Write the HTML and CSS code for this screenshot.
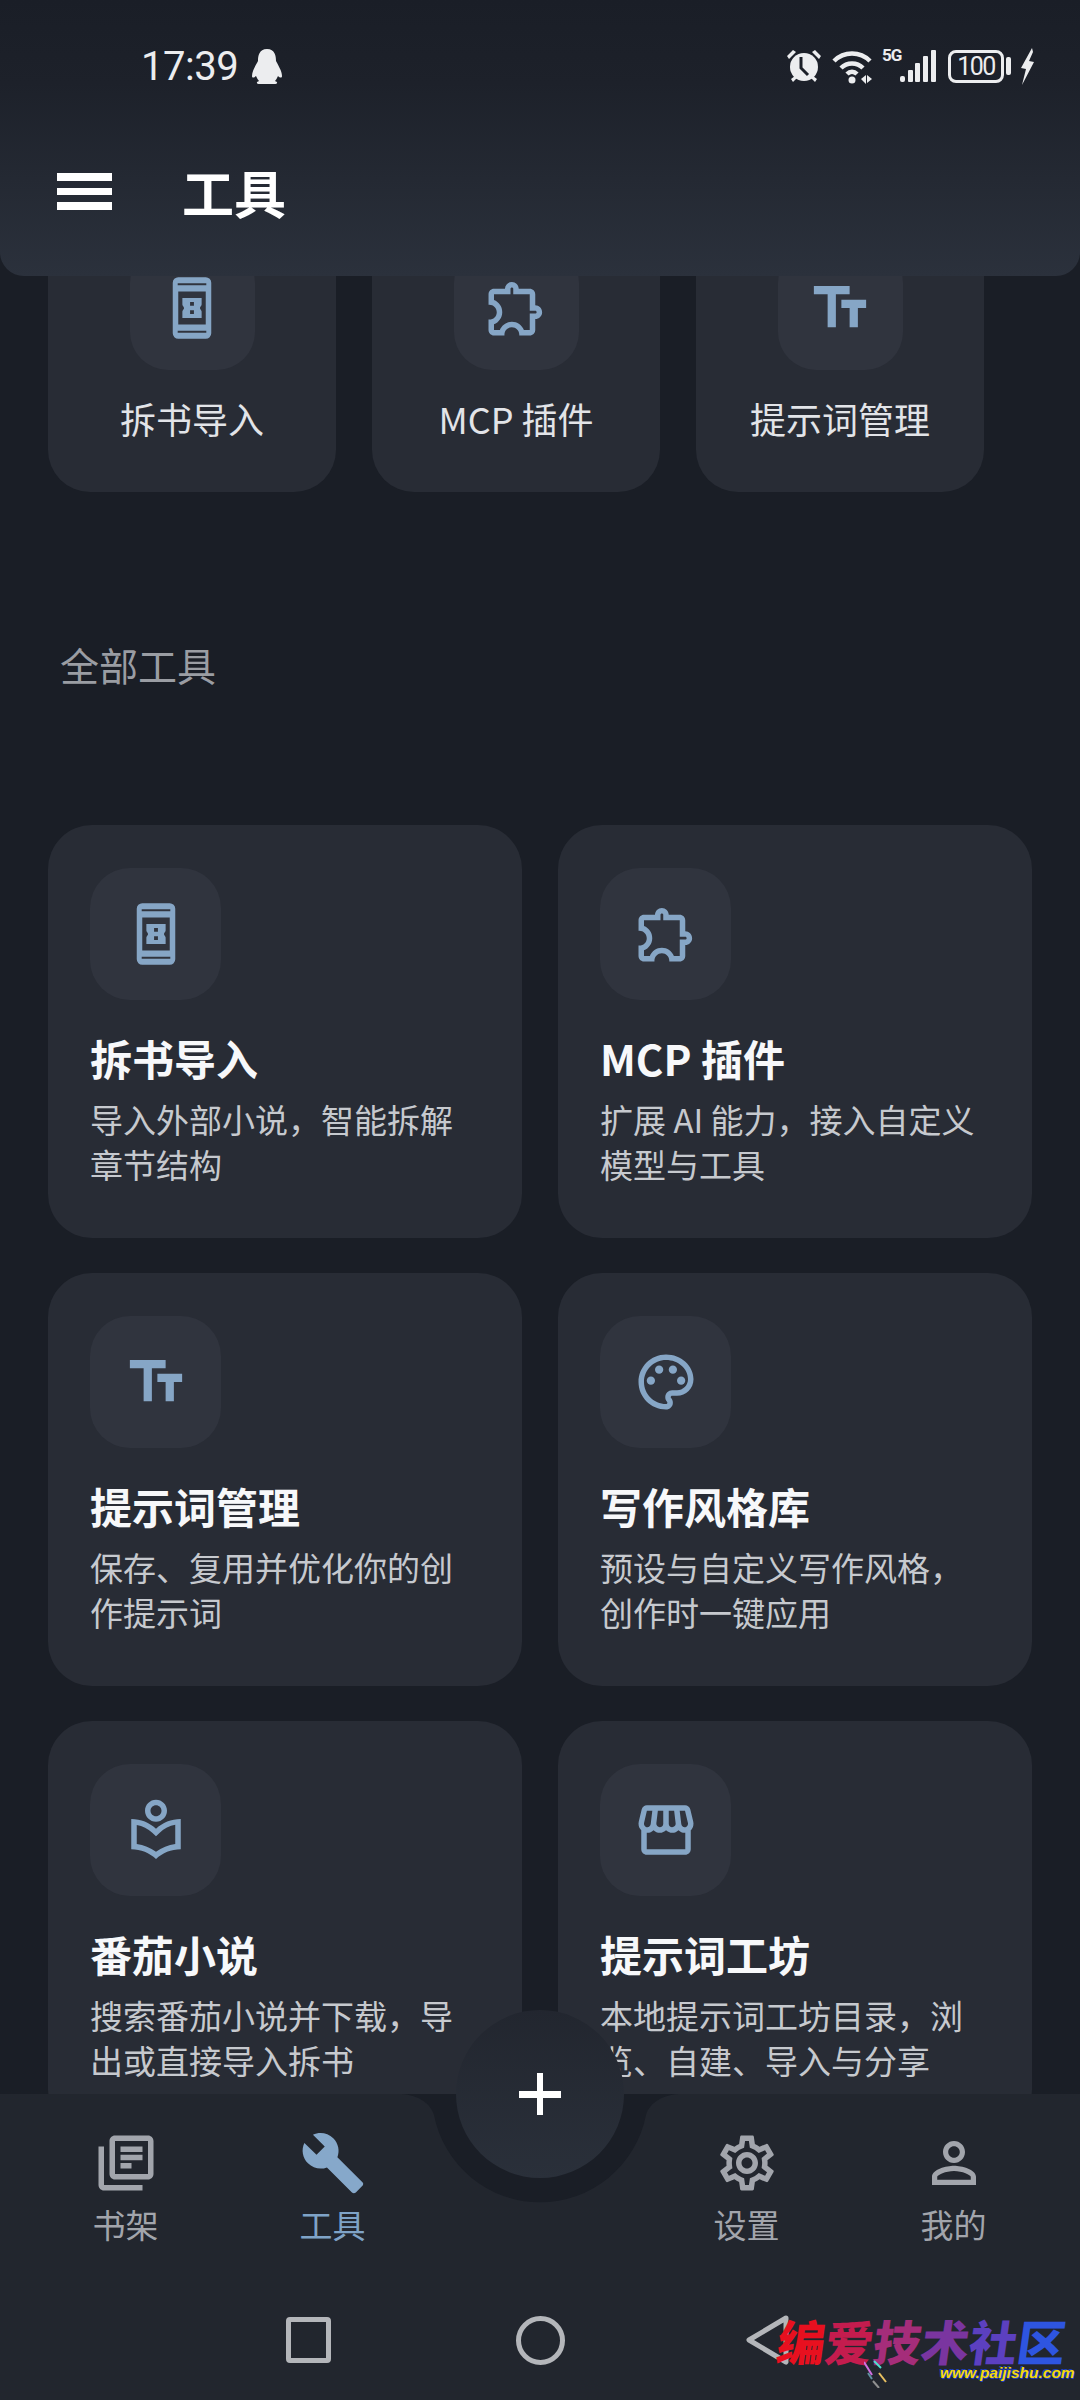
FILE: index.html
```html
<!DOCTYPE html>
<html lang="zh-CN">
<head>
    <meta charset="UTF-8">
    <meta name="viewport" content="width=device-width, initial-scale=1.0">
    <title>工具</title>
    <link rel="stylesheet" href="styles.css">
</head>
<body>
    <svg class="icon-defs" aria-hidden="true">
        <symbol id="i-phone" viewBox="0 0 24 24">
            <path fill-rule="evenodd" d="M7 .8h10a2 2 0 0 1 2 2v18.4a2 2 0 0 1-2 2H7a2 2 0 0 1-2-2V2.800a2 2 0 0 1 2-2zM6.800 3v.7h10.400V3zm.2 3v12h10V6zm-.2 14.300v.7h10.400v-.7z"/>
            <path fill-rule="evenodd" d="M8.500 8.400h7v2.300c0 .5-.6.8-.6 1.300s.6.8.6 1.300v2.300h-7v-2.300c0-.5.6-.8.6-1.300s-.6-.8-.6-1.300zM11.300 9.800v1.400h1.400V9.800zm0 3v1.400h1.400v-1.400z"/>
        </symbol>
        <symbol id="i-puzzle" viewBox="0 0 24 24">
            <path d="M10.500 4.500c.28 0 .5.22.5.5v2h6v6h2c.28 0 .5.22.5.5s-.22.5-.5.5h-2v6h-2.120c-.68-1.750-2.390-3-4.380-3s-3.700 1.250-4.380 3H4v-2.120c1.750-.68 3-2.390 3-4.380 0-1.990-1.240-3.700-2.990-4.380L4 7h6V5c0-.28.22-.5.5-.5m0-2C9.120 2.500 8 3.620 8 5H4c-1.100 0-1.990.9-1.990 2v3.800h.29c1.490 0 2.700 1.210 2.700 2.700s-1.210 2.700-2.700 2.700H2V20c0 1.100.9 2 2 2h3.800v-.3c0-1.490 1.210-2.700 2.700-2.700s2.700 1.210 2.700 2.700v.3H17c1.100 0 2-.9 2-2v-4c1.380 0 2.500-1.120 2.500-2.500S20.380 11 19 11V7c0-1.100-.9-2-2-2h-4c0-1.380-1.120-2.500-2.500-2.500z"/>
        </symbol>
        <symbol id="i-text" viewBox="0 0 24 24">
            <path d="M2.500 4v3h5v12h3V7h5V4h-13zm19 5h-9v3h3v7h3v-7h3V9z"/>
        </symbol>
        <symbol id="i-palette" viewBox="0 0 24 24">
            <path d="M12 22C6.490 22 2 17.510 2 12S6.490 2 12 2s10 4.040 10 9c0 3.310-2.690 6-6 6h-1.770c-.28 0-.5.22-.5.5 0 .12.05.23.13.33.41.47.64 1.060.64 1.670 0 1.380-1.120 2.500-2.500 2.500zm0-18c-4.410 0-8 3.590-8 8s3.590 8 8 8c.28 0 .5-.22.5-.5 0-.16-.08-.28-.14-.35-.41-.46-.63-1.050-.63-1.650 0-1.380 1.120-2.500 2.500-2.500H16c2.210 0 4-1.790 4-4 0-3.860-3.590-7-8-7z"/>
            <circle cx="6.500" cy="11.500" r="1.500"/>
            <circle cx="9.500" cy="7.500" r="1.500"/>
            <circle cx="14.500" cy="7.500" r="1.500"/>
            <circle cx="17.500" cy="11.500" r="1.500"/>
        </symbol>
        <symbol id="i-reader" viewBox="0 0 24 24">
            <path d="M12 11.550C9.640 9.350 6.480 8 3 8v11c3.480 0 6.640 1.350 9 3.550 2.360-2.190 5.520-3.550 9-3.550V8c-3.480 0-6.640 1.350-9 3.550zm7 5.580c-2.530.34-4.930 1.300-7 2.820-2.060-1.520-4.470-2.490-7-2.830v-6.950c2.100.38 4.050 1.340 5.640 2.870L12 14.300l1.360-1.310c1.590-1.530 3.540-2.490 5.640-2.870v7.010z"/>
            <path d="M12 9c2.200 0 4-1.800 4-4s-1.800-4-4-4-4 1.800-4 4 1.800 4 4 4zm0-6c1.100 0 2 .9 2 2s-.9 2-2 2-2-.9-2-2 .9-2 2-2z"/>
        </symbol>
        <symbol id="i-store" viewBox="0 0 24 24">
            <path d="M21.900 8.890l-1.050-4.370c-.22-.9-1-1.520-1.910-1.520H5.050c-.9 0-1.690.63-1.900 1.520L2.100 8.890c-.24 1.020-.02 2.060.62 2.880.08.11.19.19.28.29V19c0 1.100.9 2 2 2h14c1.100 0 2-.9 2-2v-6.940c.09-.09.2-.18.28-.28.64-.82.87-1.870.62-2.890zm-2.990-3.900l1.050 4.370c.1.42.01.84-.25 1.170-.14.18-.44.47-.94.47-.61 0-1.140-.49-1.210-1.140L16.980 5l1.930-.01zM13 5h1.960l.54 4.520c.05.39-.07.78-.33 1.070-.22.26-.54.41-.95.41-.67 0-1.220-.59-1.220-1.310V5zM8.490 9.520L9.040 5H11v4.690c0 .72-.55 1.310-1.290 1.310-.34 0-.65-.15-.89-.41-.25-.29-.37-.68-.33-1.070zm-4.450-.16L5.050 5h1.970l-.58 4.860c-.08.65-.6 1.140-1.210 1.140-.49 0-.8-.29-.93-.47-.27-.32-.36-.75-.26-1.170zM5 19v-6.030c.08.01.15.03.23.03.87 0 1.660-.36 2.240-.95.6.6 1.400.95 2.310.95.87 0 1.650-.36 2.230-.93.59.57 1.390.93 2.290.93.84 0 1.640-.35 2.240-.95.58.59 1.370.95 2.240.95.08 0 .15-.02.23-.03V19H5z"/>
        </symbol>
    </svg>

    <div class="screen">
        <main class="content">
            <div class="quick-row">
                <div class="quick-card">
                    <div class="quick-tile"><svg class="tile-icon"><use href="#i-phone"/></svg></div>
                    <span class="quick-label">拆书导入</span>
                </div>
                <div class="quick-card">
                    <div class="quick-tile"><svg class="tile-icon"><use href="#i-puzzle"/></svg></div>
                    <span class="quick-label">MCP 插件</span>
                </div>
                <div class="quick-card">
                    <div class="quick-tile"><svg class="tile-icon"><use href="#i-text"/></svg></div>
                    <span class="quick-label">提示词管理</span>
                </div>
            </div>

            <h2 class="section-title">全部工具</h2>

            <div class="tool-grid">
                <div class="tool-card">
                    <div class="tool-tile"><svg class="tile-icon"><use href="#i-phone"/></svg></div>
                    <h3 class="tool-name">拆书导入</h3>
                    <p class="tool-desc">导入外部小说，智能拆解<br>章节结构</p>
                </div>
                <div class="tool-card">
                    <div class="tool-tile"><svg class="tile-icon"><use href="#i-puzzle"/></svg></div>
                    <h3 class="tool-name">MCP 插件</h3>
                    <p class="tool-desc">扩展 AI 能力，接入自定义<br>模型与工具</p>
                </div>
                <div class="tool-card">
                    <div class="tool-tile"><svg class="tile-icon"><use href="#i-text"/></svg></div>
                    <h3 class="tool-name">提示词管理</h3>
                    <p class="tool-desc">保存、复用并优化你的创<br>作提示词</p>
                </div>
                <div class="tool-card">
                    <div class="tool-tile"><svg class="tile-icon"><use href="#i-palette"/></svg></div>
                    <h3 class="tool-name">写作风格库</h3>
                    <p class="tool-desc">预设与自定义写作风格，<br>创作时一键应用</p>
                </div>
                <div class="tool-card">
                    <div class="tool-tile"><svg class="tile-icon"><use href="#i-reader"/></svg></div>
                    <h3 class="tool-name">番茄小说</h3>
                    <p class="tool-desc">搜索番茄小说并下载，导<br>出或直接导入拆书</p>
                </div>
                <div class="tool-card">
                    <div class="tool-tile"><svg class="tile-icon"><use href="#i-store"/></svg></div>
                    <h3 class="tool-name">提示词工坊</h3>
                    <p class="tool-desc">本地提示词工坊目录，浏<br>览、自建、导入与分享</p>
                </div>
            </div>
        </main>

        <header class="app-header">
            <div class="status-bar">
                <div class="status-left">
                    <span class="clock">17:39</span>
                    <svg class="penguin" viewBox="0 0 32 35"><path d="M16 0C8 0 7 7 7 12 5 16 1 22 1 27c0 2 2 2 4 0 1 2 2 4 3 5-3 1-3 3 1 3h14c4 0 4-2 1-3 1-1 2-3 3-5 2 2 4 2 4 0 0-5-4-11-6-15 0-5-1-12-9-12z"/></svg>
                </div>
                <div class="status-right">
                    <svg class="st-alarm" viewBox="0 0 36 36">
                        <circle cx="18" cy="19" r="14"/>
                        <path d="M1 8l6-6 3 2-7 7zM35 8l-6-6-3 2 7 7zM5 31l4-3 2 2-4 4zM31 31l-4-3-2 2 4 4z"/>
                        <path class="st-hand" d="M15 9v11l7 7"/>
                    </svg>
                    <svg class="st-wifi" viewBox="0 0 40 36">
                        <path class="st-arc" d="M2 13C12 3 28 3 38 13"/>
                        <path class="st-arc" d="M9 20c6-6 16-6 22 0"/>
                        <path class="st-arc" d="M15 26c3-3 7-3 10 0"/>
                        <circle cx="20" cy="32" r="3.500"/>
                        <path d="M29 31l5-4v9zM35 27l5 4-5 4z"/>
                    </svg>
                    <div class="st-cell">
                        <span class="st-5g">5G</span>
                        <svg class="st-signal" viewBox="0 0 36 34">
                            <rect x="0" y="27" width="5" height="6" rx="2"/>
                            <rect x="8" y="21" width="5" height="12" rx="1"/>
                            <rect x="15" y="14" width="5" height="19" rx="1"/>
                            <rect x="23" y="7" width="5" height="26" rx="1"/>
                            <rect x="31" y="1" width="5" height="32" rx="1"/>
                        </svg>
                    </div>
                    <div class="battery"><span class="battery-level">100</span></div>
                    <span class="battery-nub"></span>
                    <svg class="st-bolt" viewBox="0 0 15 37"><path d="M12 0L1 20l5 1-4 16L14 14l-5-1 4-9z"/></svg>
                </div>
            </div>
            <div class="toolbar">
                <div class="hamburger"><span></span><span></span><span></span></div>
                <h1 class="page-title">工具</h1>
            </div>
        </header>

        <footer class="bottom-bar">
            <svg class="notch" viewBox="0 0 284 110"><path d="M0 0C18 0 32 8 36 21A108 108 0 0 0 248 21C252 8 266 0 284 0Z"/></svg>
            <button class="fab" type="button">
                <svg viewBox="0 0 42 42"><path d="M18 0h6v18h18v7H24v17h-6V25H0v-7h18z"/></svg>
            </button>
            <nav class="tab-row">
                <div class="tab">
                    <svg class="tab-icon" viewBox="0 0 24 24"><path d="M4 6H2v14c0 1.100.9 2 2 2h14v-2H4V6zm16-4H8c-1.100 0-2 .9-2 2v12c0 1.100.9 2 2 2h12c1.100 0 2-.9 2-2V4c0-1.100-.9-2-2-2zm0 14H8V4h12v12zM10 9h8v2h-8zm0 3h4v2h-4zm0-6h8v2h-8z"/></svg>
                    <span>书架</span>
                </div>
                <div class="tab tab-active">
                    <svg class="tab-icon" viewBox="0 0 24 24"><path d="M22.700 19l-9.100-9.100c.9-2.300.4-5-1.500-6.900-2-2-5-2.400-7.400-1.300L9 6 6 9 1.600 4.700C.4 7.100.9 10.100 2.900 12.100c1.900 1.900 4.600 2.400 6.900 1.500l9.100 9.100c.4.4 1 .4 1.400 0l2.300-2.300c.5-.4.5-1.100.1-1.400z"/></svg>
                    <span>工具</span>
                </div>
                <div class="tab-gap"></div>
                <div class="tab">
                    <svg class="tab-icon" viewBox="0 0 24 24"><path d="M19.430 12.980c.04-.32.07-.64.07-.98 0-.34-.03-.66-.07-.98l2.110-1.650c.19-.15.24-.42.12-.64l-2-3.460c-.09-.16-.26-.25-.44-.25-.06 0-.12.01-.17.03l-2.490 1c-.52-.4-1.080-.73-1.690-.98l-.38-2.650C14.460 2.180 14.250 2 14 2h-4c-.25 0-.46.18-.49.42l-.38 2.650c-.61.25-1.170.59-1.690.98l-2.490-1c-.06-.02-.12-.03-.18-.03-.17 0-.34.09-.43.25l-2 3.460c-.13.22-.07.49.12.64l2.110 1.650c-.04.32-.07.65-.07.98 0 .33.03.66.07.98l-2.110 1.650c-.19.15-.24.42-.12.64l2 3.460c.09.16.26.25.44.25.06 0 .12-.01.17-.03l2.490-1c.52.4 1.080.73 1.690.98l.38 2.650c.03.24.24.42.49.42h4c.25 0 .46-.18.49-.42l.38-2.650c.61-.25 1.170-.59 1.690-.98l2.490 1c.06.02.12.03.18.03.17 0 .34-.09.43-.25l2-3.460c.12-.22.07-.49-.12-.64l-2.110-1.650zm-1.980-1.710c.04.31.05.52.05.73 0 .21-.02.43-.05.73l-.14 1.130.89.7 1.080.84-.7 1.210-1.270-.51-1.040-.42-.9.68c-.43.32-.84.56-1.250.73l-1.060.43-.16 1.130-.2 1.350h-1.400l-.19-1.350-.16-1.130-1.060-.43c-.43-.18-.83-.41-1.230-.71l-.91-.7-1.060.43-1.270.51-.7-1.210 1.080-.84.89-.7-.14-1.130c-.03-.31-.05-.54-.05-.74s.02-.43.05-.73l.14-1.130-.89-.7-1.080-.84.7-1.210 1.270.51 1.040.42.9-.68c.43-.32.84-.56 1.250-.73l1.060-.43.16-1.130.2-1.350h1.390l.19 1.350.16 1.130 1.060.43c.43.18.83.41 1.230.71l.91.7 1.060-.43 1.270-.51.7 1.210-1.070.85-.89.7.14 1.130zM12 8c-2.210 0-4 1.790-4 4s1.790 4 4 4 4-1.790 4-4-1.790-4-4-4zm0 6c-1.100 0-2-.9-2-2s.9-2 2-2 2 .9 2 2-.9 2-2 2z"/></svg>
                    <span>设置</span>
                </div>
                <div class="tab">
                    <svg class="tab-icon" viewBox="0 0 24 24"><path d="M12 5.900c1.160 0 2.100.94 2.100 2.100s-.94 2.100-2.100 2.100S9.900 9.160 9.900 8s.94-2.100 2.100-2.100m0 9c2.970 0 6.100 1.460 6.100 2.100v1.100H5.900V17c0-.64 3.130-2.100 6.100-2.100M12 4C9.790 4 8 5.790 8 8s1.790 4 4 4 4-1.790 4-4-1.790-4-4-4zm0 9c-2.670 0-8 1.340-8 4v3h16v-3c0-2.660-5.330-4-8-4z"/></svg>
                    <span>我的</span>
                </div>
            </nav>
            <div class="sys-nav">
                <span class="sys-square"></span>
                <span class="sys-circle"></span>
                <svg class="sys-back" viewBox="0 0 46 50"><path d="M41 3L4 25l37 22z"/></svg>
            </div>
            <div class="watermark">
                <div class="wm-title">
                    <span class="wm-c1">编</span><span class="wm-c2">爱</span><span class="wm-c3">技</span><span class="wm-c4">术</span><span class="wm-c5">社</span><span class="wm-c6">区</span>
                </div>
                <div class="wm-url">www.paijishu.com</div>
                <svg class="wm-streaks" viewBox="0 0 24 28">
                    <path class="wm-s1" d="M0 2l8 13"/>
                    <path class="wm-s2" d="M10 1l7 7"/>
                    <path class="wm-s3" d="M15 13l7 9"/>
                    <path class="wm-s4" d="M4 13l4 6"/>
                    <path class="wm-s5" d="M9 21l6 7"/>
                </svg>
            </div>
        </footer>
    </div>
</body>
</html>
```

FILE: styles.css
```css
html, body {
    margin: 0;
    padding: 0;
    background: #1a1e26;
}
body {
    font-family: "Noto Sans CJK SC", "Noto Sans", sans-serif;
    color: #fff;
}
.icon-defs {
    display: none;
}
.screen {
    position: relative;
    width: 1080px;
    height: 2400px;
    overflow: hidden;
    background: #1a1e26;
}

/* scrolled content, runs under header and bottom bar */
.content {
    padding: 215px 48px 0;
}
.quick-row {
    display: flex;
    gap: 36px;
}
.quick-card {
    width: 288px;
    height: 277px;
    padding-top: 30px;
    box-sizing: border-box;
    display: flex;
    flex-direction: column;
    align-items: center;
    background: #282c35;
    border-radius: 42px;
}
.quick-tile {
    width: 125px;
    height: 125px;
    display: flex;
    align-items: center;
    justify-content: center;
    background: #30343e;
    border-radius: 38px;
}
.quick-label {
    margin-top: 22px;
    font-size: 36px;
    line-height: 52px;
    color: #e2e4e8;
}
.section-title {
    margin: 144px 0 133px 12px;
    font-size: 39px;
    line-height: 56px;
    font-weight: 400;
    color: #9a9da3;
}
.tool-grid {
    display: grid;
    grid-template-columns: 474px 474px;
    column-gap: 36px;
    row-gap: 35px;
}
.tool-card {
    height: 413px;
    padding: 43px 42px 0;
    box-sizing: border-box;
    background: #282c35;
    border-radius: 44px;
}
.tool-tile {
    width: 131px;
    height: 132px;
    display: flex;
    align-items: center;
    justify-content: center;
    background: #30343e;
    border-radius: 40px;
}
.tile-icon {
    width: 66px;
    height: 66px;
    fill: #86a6c6;
}
.tool-name {
    margin: 30px 0 0;
    font-size: 42px;
    line-height: 56px;
    font-weight: 700;
    color: #f7f8fa;
}
.tool-desc {
    margin: 11px 0 0;
    font-size: 33px;
    line-height: 45px;
    color: #c6c9ce;
    white-space: nowrap;
}

/* header overlay */
.app-header {
    position: absolute;
    top: 0;
    left: 0;
    right: 0;
    height: 276px;
    background: linear-gradient(#1a1e27, #1d212a 30%, #2b313c);
    border-radius: 0 0 24px 24px;
}
.status-bar {
    height: 130px;
    display: flex;
    align-items: center;
    justify-content: space-between;
    padding: 2px 45px 0 141px;
    box-sizing: border-box;
}
.status-left,
.status-right {
    display: flex;
    align-items: center;
}
.clock {
    font-family: Roboto, sans-serif;
    font-size: 40px;
    letter-spacing: -0.5px;
    color: #ecedef;
}
.penguin {
    width: 32px;
    height: 35px;
    margin-left: 13px;
    fill: #ecedef;
}
.status-right svg {
    fill: #ecedef;
}
.st-alarm {
    width: 36px;
    height: 36px;
}
.st-hand {
    fill: none !important;
    stroke: #1b1f28;
    stroke-width: 3;
}
.st-wifi {
    width: 40px;
    height: 36px;
    margin-left: 10px;
}
.st-arc {
    fill: none;
    stroke: #ecedef;
    stroke-width: 4.500;
}
.st-cell {
    position: relative;
    width: 36px;
    height: 34px;
    margin-left: 28px;
}
.st-5g {
    position: absolute;
    top: -3px;
    left: -18px;
    font-family: Roboto, sans-serif;
    font-size: 17px;
    line-height: 18px;
    font-weight: 700;
    letter-spacing: -1px;
    color: #ecedef;
}
.st-signal {
    display: block;
    width: 36px;
    height: 34px;
}
.battery {
    width: 56px;
    height: 33px;
    margin-left: 12px;
    box-sizing: border-box;
    border: 3px solid #ecedef;
    border-radius: 8px;
    display: flex;
    align-items: center;
    justify-content: center;
}
.battery-level {
    font-family: Roboto, sans-serif;
    font-size: 25px;
    letter-spacing: -1.500px;
    color: #ecedef;
}
.battery-nub {
    width: 5px;
    height: 18px;
    margin-left: 2px;
    border-radius: 2px;
    background: #ecedef;
}
.st-bolt {
    width: 15px;
    height: 37px;
    margin-left: 9px;
}
.toolbar {
    height: 130px;
    display: flex;
    align-items: center;
    padding-left: 57px;
}
.hamburger {
    width: 55px;
    margin-bottom: 7px;
    display: flex;
    flex-direction: column;
    gap: 7px;
}
.hamburger span {
    height: 7.500px;
    background: #fff;
}
.page-title {
    margin: 0 0 6px 70px;
    font-size: 52px;
    line-height: 70px;
    font-weight: 700;
    color: #fff;
}

/* bottom bar overlay */
.bottom-bar {
    position: absolute;
    left: 0;
    right: 0;
    bottom: 0;
    height: 306px;
    background: #22262e;
}
.notch {
    position: absolute;
    top: 0;
    left: 398px;
    width: 284px;
    height: 110px;
    fill: #1a1e26;
}
.fab {
    position: absolute;
    top: -84px;
    left: 456px;
    width: 168px;
    height: 168px;
    padding: 0;
    border: none;
    border-radius: 50%;
    background: linear-gradient(#22262f, #2a303a);
    display: flex;
    align-items: center;
    justify-content: center;
}
.fab svg {
    width: 42px;
    height: 42px;
    fill: #fff;
}
.tab-row {
    display: grid;
    grid-template-columns: repeat(5, 207px);
    padding: 36px 0 0 22px;
}
.tab {
    display: flex;
    flex-direction: column;
    align-items: center;
    font-size: 33px;
    line-height: 44px;
    color: #a2a5ac;
}
.tab span {
    margin-top: 6px;
}
.tab-icon {
    width: 66px;
    height: 66px;
    fill: #a2a5ac;
}
.tab-active,
.tab-active .tab-icon {
    color: #7fa3c7;
    fill: #86a8ca;
}
.sys-nav {
    display: flex;
    align-items: center;
    justify-content: center;
    gap: 185px;
    margin-top: 69px;
    padding-right: 4px;
}
.sys-square {
    width: 45px;
    height: 46px;
    box-sizing: border-box;
    border: 5px solid #b4b6ba;
    border-radius: 4px;
}
.sys-circle {
    width: 49px;
    height: 49px;
    box-sizing: border-box;
    border: 5px solid #b4b6ba;
    border-radius: 50%;
}
.sys-back {
    width: 46px;
    height: 50px;
    margin-left: -5px;
    fill: none;
    stroke: #b4b6ba;
    stroke-width: 5;
    stroke-linejoin: round;
}

/* site watermark stamped over the corner */
.watermark {
    position: absolute;
    top: 218px;
    left: 778px;
    width: 300px;
}
.wm-title {
    display: flex;
    font-family: "Noto Sans CJK SC", sans-serif;
    font-size: 48px;
    line-height: 56px;
    font-weight: 900;
    transform: skewX(-8deg);
}
.wm-c1 { color: #e8101f; }
.wm-c2 { color: #c41c4e; }
.wm-c3 { color: #a52d7a; }
.wm-c4 { color: #7a35a0; }
.wm-c5 { color: #5c40c0; }
.wm-c6 { color: #2e55e0; }
.wm-url {
    width: 136px;
    margin: -5px 0 0 162px;
    font-family: "Liberation Sans", sans-serif;
    font-size: 15.500px;
    line-height: 20px;
    font-weight: 700;
    font-style: italic;
    color: #f5d90a;
    text-shadow: 1px 1px 0 #1d3fc0, -1px -1px 0 #1d3fc0;
    white-space: nowrap;
}
.wm-streaks {
    position: absolute;
    top: 48px;
    left: 86px;
    width: 24px;
    height: 28px;
    fill: none;
    stroke-width: 2;
}
.wm-s1 { stroke: #d070e0; }
.wm-s2 { stroke: #50e0d0; }
.wm-s3 { stroke: #e8c060; }
.wm-s4 { stroke: #6090a0; }
.wm-s5 { stroke: #909090; }
```
